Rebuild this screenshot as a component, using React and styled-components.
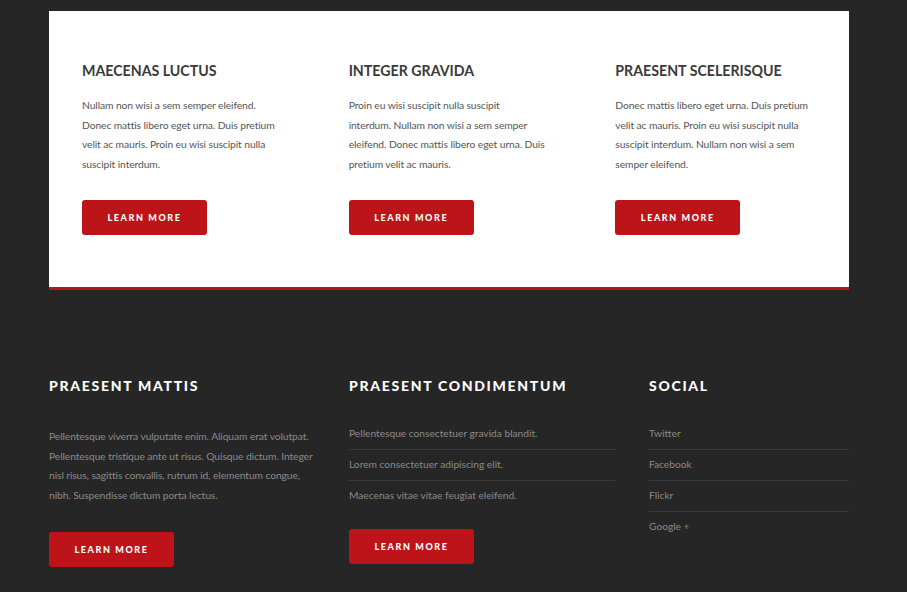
import React from 'react';
import styled, { createGlobalStyle } from 'styled-components';

const GlobalStyle = createGlobalStyle`
  body {
    margin: 0;
    background: #262626;
    font-family: 'Lato', 'Open Sans', sans-serif;
  }
`;

const Page = styled.div`
  width: 800px;
  margin-left: 49px;
  padding-top: 11px;
`;

const Panel = styled.section`
  background: #fff;
  border-bottom: 3px solid #b3171c;
  display: grid;
  grid-template-columns: repeat(3, 1fr);
  padding: 51px 0 52px;
`;

const Feature = styled.div`
  padding: 0 20px 0 33px;
`;

const FeatureTitle = styled.h3`
  margin: 0 0 16px;
  font-size: 14.2px;
  font-weight: 700;
  color: #3a3a3a;
  line-height: 18px;
`;

const Text = styled.p`
  margin: 0;
  font-size: 10.3px;
  line-height: 19.5px;
  color: ${p => (p.dark ? '#8a8a8a' : '#555')};
  letter-spacing: -0.1px;
  white-space: ${p => (p.lines ? 'pre-line' : 'normal')};
`;

const Button = styled.a`
  display: flex;
  align-items: center;
  justify-content: center;
  width: 125px;
  height: 35px;
  margin-top: ${p => p.top}px;
  background: #bd1419;
  border-radius: 3px;
  color: #fff;
  font-size: 9px;
  font-weight: 900;
  letter-spacing: 1.6px;
  text-decoration: none;
`;

const Footer = styled.footer`
  display: grid;
  grid-template-columns: 300px 300px 200px;
  padding-top: 87px;
`;

const Column = styled.div`
  padding-right: ${p => p.pr || 0}px;
`;

const FooterTitle = styled.h4`
  margin: 0 0 ${p => p.gap}px;
  color: #fff;
  font-size: 14px;
  font-weight: 900;
  letter-spacing: 1.7px;
  line-height: 18px;
`;

const List = styled.ul`
  list-style: none;
  margin: 0;
  padding: 0;
`;

const Item = styled.li`
  font-size: 10.2px;
  color: #8a8a8a;
  line-height: 15px;
  padding: 7.5px 0;
  border-top: ${p => (p.first ? 'none' : '1px solid #3a3a3a')};
  &:first-child {
    padding-top: 0;
  }
`;

const features = [
  {
    title: 'MAECENAS LUCTUS',
    text: 'Nullam non wisi a sem semper eleifend.\nDonec mattis libero eget urna. Duis pretium\nvelit ac mauris. Proin eu wisi suscipit nulla\nsuscipit interdum.',
  },
  {
    title: 'INTEGER GRAVIDA',
    text: 'Proin eu wisi suscipit nulla suscipit\ninterdum. Nullam non wisi a sem semper\neleifend. Donec mattis libero eget urna. Duis\npretium velit ac mauris.',
  },
  {
    title: 'PRAESENT SCELERISQUE',
    text: 'Donec mattis libero eget urna. Duis pretium\nvelit ac mauris. Proin eu wisi suscipit nulla\nsuscipit interdum. Nullam non wisi a sem\nsemper eleifend.',
  },
];

const links = [
  'Pellentesque consectetuer gravida blandit.',
  'Lorem consectetuer adipiscing elit.',
  'Maecenas vitae vitae feugiat eleifend.',
];

const social = ['Twitter', 'Facebook', 'Flickr', 'Google +'];

const App = () => {
  return (
    <>
      <GlobalStyle />
      <Page>
        <Panel>
          {features.map(f => (
            <Feature key={f.title}>
              <FeatureTitle>{f.title}</FeatureTitle>
              <Text lines>{f.text}</Text>
              <Button href="#" top={26}>LEARN MORE</Button>
            </Feature>
          ))}
        </Panel>

        <Footer>
          <Column pr={30}>
            <FooterTitle gap={32}>PRAESENT MATTIS</FooterTitle>
            <Text dark>
              Pellentesque viverra vulputate enim. Aliquam erat volutpat. Pellentesque tristique ante ut risus. Quisque dictum. Integer nisl risus, sagittis convallis, rutrum id, elementum congue, nibh. Suspendisse dictum porta lectus.
            </Text>
            <Button href="#" top={27}>LEARN MORE</Button>
          </Column>
          <Column pr={34}>
            <FooterTitle gap={31}>PRAESENT CONDIMENTUM</FooterTitle>
            <List>
              {links.map((l, i) => (
                <Item key={l} first={i === 0}>{l}</Item>
              ))}
            </List>
            <Button href="#" top={18}>LEARN MORE</Button>
          </Column>
          <Column>
            <FooterTitle gap={31}>SOCIAL</FooterTitle>
            <List>
              {social.map((s, i) => (
                <Item key={s} first={i === 0}>{s}</Item>
              ))}
            </List>
          </Column>
        </Footer>
      </Page>
    </>
  );
};

export default App;
